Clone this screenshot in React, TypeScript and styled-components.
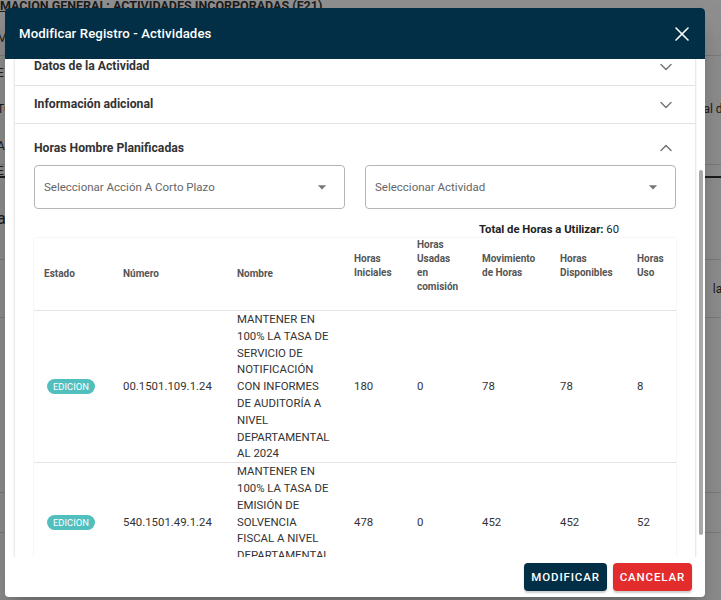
import React, { useLayoutEffect, useRef } from 'react'
import styled, { createGlobalStyle } from 'styled-components'
import { ChevronDown, ChevronUp, X } from 'lucide-react'

const GlobalStyle = createGlobalStyle`
  html, body {
    margin: 0;
    padding: 0;
    width: 721px;
    height: 600px;
    overflow: hidden;
    font-family: Roboto, "Liberation Sans", sans-serif;
  }
  * { box-sizing: border-box; }
`

const Page = styled.div`
  position: relative;
  width: 721px;
  height: 600px;
  overflow: hidden;
  background: #ffffff;
  color: #222;
`

const BgTitle = styled.div`
  margin-left: -36px;
  height: 20px;
  font-size: 12.5px;
  font-weight: 700;
  line-height: 12px;
  color: #333;
  text-transform: uppercase;
  text-decoration: underline;
`

const BgRow = styled.div<{ $h: number; $line?: string }>`
  height: ${p => p.$h}px;
  display: flex;
  align-items: center;
  justify-content: space-between;
  border-bottom: ${p => p.$line || '1px solid #ddd'};
  font-size: 12px;
  color: #333;
`

const BgLeft = styled.span<{ $big?: boolean }>`
  margin-left: -3px;
  font-size: ${p => (p.$big ? '16px' : '12px')};
`

const BgRight = styled.span`
  margin-right: -8px;
`

const Overlay = styled.div`
  position: absolute;
  inset: 0;
  background: rgba(0, 0, 0, 0.44);
`

const Dialog = styled.div`
  position: absolute;
  left: 5px;
  top: 8px;
  width: 700px;
  height: 589px;
  display: flex;
  flex-direction: column;
  background: #fff;
  border-radius: 4px;
  overflow: hidden;
  box-shadow: 0 11px 15px -7px rgba(0,0,0,.2), 0 24px 38px 3px rgba(0,0,0,.14);
`

const Header = styled.div`
  height: 51px;
  flex: none;
  display: flex;
  align-items: center;
  justify-content: space-between;
  padding: 0 11px 0 14px;
  background: #022f45;
  color: #fff;
`

const Title = styled.h2`
  margin: 0;
  font-size: 13.2px;
  font-weight: 500;
  letter-spacing: 0.1px;
`

const CloseButton = styled.button`
  display: flex;
  padding: 0;
  border: 0;
  background: transparent;
  color: #fff;
  cursor: pointer;
`

const Body = styled.div`
  position: relative;
  flex: 1;
  min-height: 0;
`

const Scroller = styled.div`
  height: 100%;
  overflow-y: scroll;
  padding: 0 10px 20px;
  scrollbar-width: none;
  &::-webkit-scrollbar { display: none; }
`

const ScrollThumb = styled.div`
  position: absolute;
  right: 2px;
  top: 111px;
  width: 4px;
  height: 365px;
  border-radius: 2px;
  background: #a9a9a9;
`

const Paper = styled.div`
  background: #fff;
  border-radius: 4px;
  box-shadow: 0 1px 3px rgba(0,0,0,.2), 0 1px 1px rgba(0,0,0,.12);
`

const Summary = styled.div<{ $open?: boolean }>`
  display: flex;
  align-items: ${p => (p.$open ? 'flex-start' : 'center')};
  justify-content: space-between;
  height: ${p => (p.$open ? '41px' : '38px')};
  padding: ${p => (p.$open ? '16px 19px 0 19px' : '0 19px 0 19px')};
  border-bottom: ${p => (p.$open ? 'none' : '1px solid #e2e2e2')};
  color: #333;
  svg { color: #777; flex: none; }
`

const SummaryText = styled.span`
  font-size: 12.2px;
  font-weight: 700;
  line-height: 17px;
`

const Details = styled.div`
  padding: 0 19px 16px;
`

const SelectRow = styled.div`
  display: grid;
  grid-template-columns: 1fr 1fr;
  gap: 20px;
`

const SelectBox = styled.div`
  height: 44px;
  display: flex;
  align-items: center;
  justify-content: space-between;
  padding: 0 12px 0 9px;
  border: 1px solid #b5b5b5;
  border-radius: 4px;
  font-size: 11.5px;
  color: #666;
`

const Total = styled.div`
  margin: 13px 57px 0 0;
  text-align: right;
  font-size: 11.3px;
  line-height: 16px;
  color: #222;
  b { font-weight: 700; }
`

const TableWrap = styled.div`
  box-shadow: 0 0 2px rgba(0,0,0,.12);
  border-radius: 2px;
`

const Table = styled.table`
  width: 100%;
  border-collapse: collapse;
  table-layout: fixed;
`

const Th = styled.th<{ $w: number }>`
  width: ${p => p.$w}px;
  height: 70px;
  padding: 0 12px 0 10px;
  text-align: left;
  vertical-align: middle;
  font-size: 10px;
  font-weight: 700;
  line-height: 14px;
  color: #555;
  border-bottom: 1px solid #e4e4e4;
`

const SortSlot = styled.span`
  display: inline-block;
  width: 16px;
  height: 16px;
  margin-left: 4px;
  vertical-align: middle;
  visibility: hidden;
`

const Td = styled.td`
  padding: 0 12px 0 10px;
  vertical-align: middle;
  font-size: 11.4px;
  line-height: 16.8px;
  color: #333;
  border-bottom: 1px solid #e4e4e4;
`

const Badge = styled.span`
  display: inline-block;
  margin-left: 3px;
  padding: 0 6px;
  height: 15px;
  line-height: 15px;
  border-radius: 8px;
  background: #52bfbf;
  color: #fff;
  font-size: 9.4px;
`

const Footer = styled.div`
  height: 40px;
  flex: none;
  display: flex;
  align-items: center;
  justify-content: flex-end;
  gap: 6px;
  padding: 0 13px 0 0;
`

const ActionButton = styled.button<{ $color: string }>`
  height: 28px;
  padding: 0 7px;
  border: 0;
  border-radius: 4px;
  background: ${p => p.$color};
  color: #fff;
  font-family: inherit;
  font-size: 11.5px;
  font-weight: 500;
  letter-spacing: 0.85px;
  box-shadow: 0 2px 2px rgba(0,0,0,.2);
  cursor: pointer;
`

const Caret = () => (
  <svg width="20" height="20" viewBox="0 0 24 24" fill="#777">
    <path d="M7 10l5 5 5-5z" />
  </svg>
)

const columns = [
  { w: 79, label: 'Estado' },
  { w: 114, label: 'Número' },
  { w: 117, label: 'Nombre' },
  { w: 63, label: 'Horas Iniciales' },
  { w: 65, label: 'Horas Usadas en comisión' },
  { w: 78, label: 'Movimiento de Horas' },
  { w: 77, label: 'Horas Disponibles' },
  { w: 49, label: 'Horas Uso' },
]

const rows = [
  {
    estado: 'EDICION',
    numero: '00.1501.109.1.24',
    nombre: 'MANTENER EN 100% LA TASA DE SERVICIO DE NOTIFICACIÓN CON INFORMES DE AUDITORÍA A NIVEL DEPARTAMENTAL AL 2024',
    iniciales: 180,
    usadas: 0,
    movimiento: 78,
    disponibles: 78,
    uso: 8,
  },
  {
    estado: 'EDICION',
    numero: '540.1501.49.1.24',
    nombre: 'MANTENER EN 100% LA TASA DE EMISIÓN DE SOLVENCIA FISCAL A NIVEL DEPARTAMENTAL AL 2024',
    iniciales: 478,
    usadas: 0,
    movimiento: 452,
    disponibles: 452,
    uso: 52,
  },
]

function Background() {
  return (
    <div>
      <BgTitle>Información general: actividades incorporadas (F21)</BgTitle>
      <BgRow $h={36}><BgLeft>M</BgLeft><BgRight /></BgRow>
      <BgRow $h={34} $line="none"><BgLeft>E</BgLeft><BgRight /></BgRow>
      <BgRow $h={38} $line="none"><BgLeft>TO</BgLeft><BgRight>al de</BgRight></BgRow>
      <BgRow $h={37}><BgLeft>A</BgLeft><BgRight /></BgRow>
      <BgRow $h={13} $line="2px solid #333"><BgLeft>E</BgLeft><BgRight /></BgRow>
      <BgRow $h={82}><BgLeft $big>a</BgLeft><BgRight /></BgRow>
      <BgRow $h={58}><BgLeft /><BgRight>lad</BgRight></BgRow>
      <BgRow $h={175}><BgLeft /><BgRight>O</BgRight></BgRow>
      <BgRow $h={40}><BgLeft /><BgRight /></BgRow>
    </div>
  )
}

export default function App() {
  const scrollRef = useRef<HTMLDivElement>(null)

  useLayoutEffect(() => {
    if (scrollRef.current) scrollRef.current.scrollTop = 11
  }, [])

  return (
    <Page>
      <GlobalStyle />
      <Background />
      <Overlay />
      <Dialog>
        <Header>
          <Title>Modificar Registro - Actividades</Title>
          <CloseButton aria-label="Cerrar">
            <X size={24} strokeWidth={1.6} />
          </CloseButton>
        </Header>
        <Body>
          <Scroller ref={scrollRef}>
            <Paper>
              <Summary>
                <SummaryText>Datos de la Actividad</SummaryText>
                <ChevronDown size={20} strokeWidth={1.8} />
              </Summary>
              <Summary>
                <SummaryText>Información adicional</SummaryText>
                <ChevronDown size={20} strokeWidth={1.8} />
              </Summary>
              <Summary $open>
                <SummaryText>Horas Hombre Planificadas</SummaryText>
                <ChevronUp size={20} strokeWidth={1.8} style={{ marginTop: -2 }} />
              </Summary>
              <Details>
                <SelectRow>
                  <SelectBox>
                    Seleccionar Acción A Corto Plazo
                    <Caret />
                  </SelectBox>
                  <SelectBox>
                    Seleccionar Actividad
                    <Caret />
                  </SelectBox>
                </SelectRow>
                <Total>
                  <b>Total de Horas a Utilizar:</b> 60
                </Total>
                <TableWrap>
                  <Table>
                    <thead>
                      <tr>
                        {columns.map(c => (
                          <Th key={c.label} $w={c.w}>
                            {c.label}
                            <SortSlot />
                          </Th>
                        ))}
                      </tr>
                    </thead>
                    <tbody>
                      {rows.map(r => (
                        <tr key={r.numero}>
                          <Td><Badge>{r.estado}</Badge></Td>
                          <Td>{r.numero}</Td>
                          <Td>{r.nombre}</Td>
                          <Td>{r.iniciales}</Td>
                          <Td>{r.usadas}</Td>
                          <Td>{r.movimiento}</Td>
                          <Td>{r.disponibles}</Td>
                          <Td>{r.uso}</Td>
                        </tr>
                      ))}
                    </tbody>
                  </Table>
                </TableWrap>
              </Details>
            </Paper>
          </Scroller>
          <ScrollThumb />
        </Body>
        <Footer>
          <ActionButton $color="#022f45">MODIFICAR</ActionButton>
          <ActionButton $color="#e32d2d">CANCELAR</ActionButton>
        </Footer>
      </Dialog>
    </Page>
  )
}
